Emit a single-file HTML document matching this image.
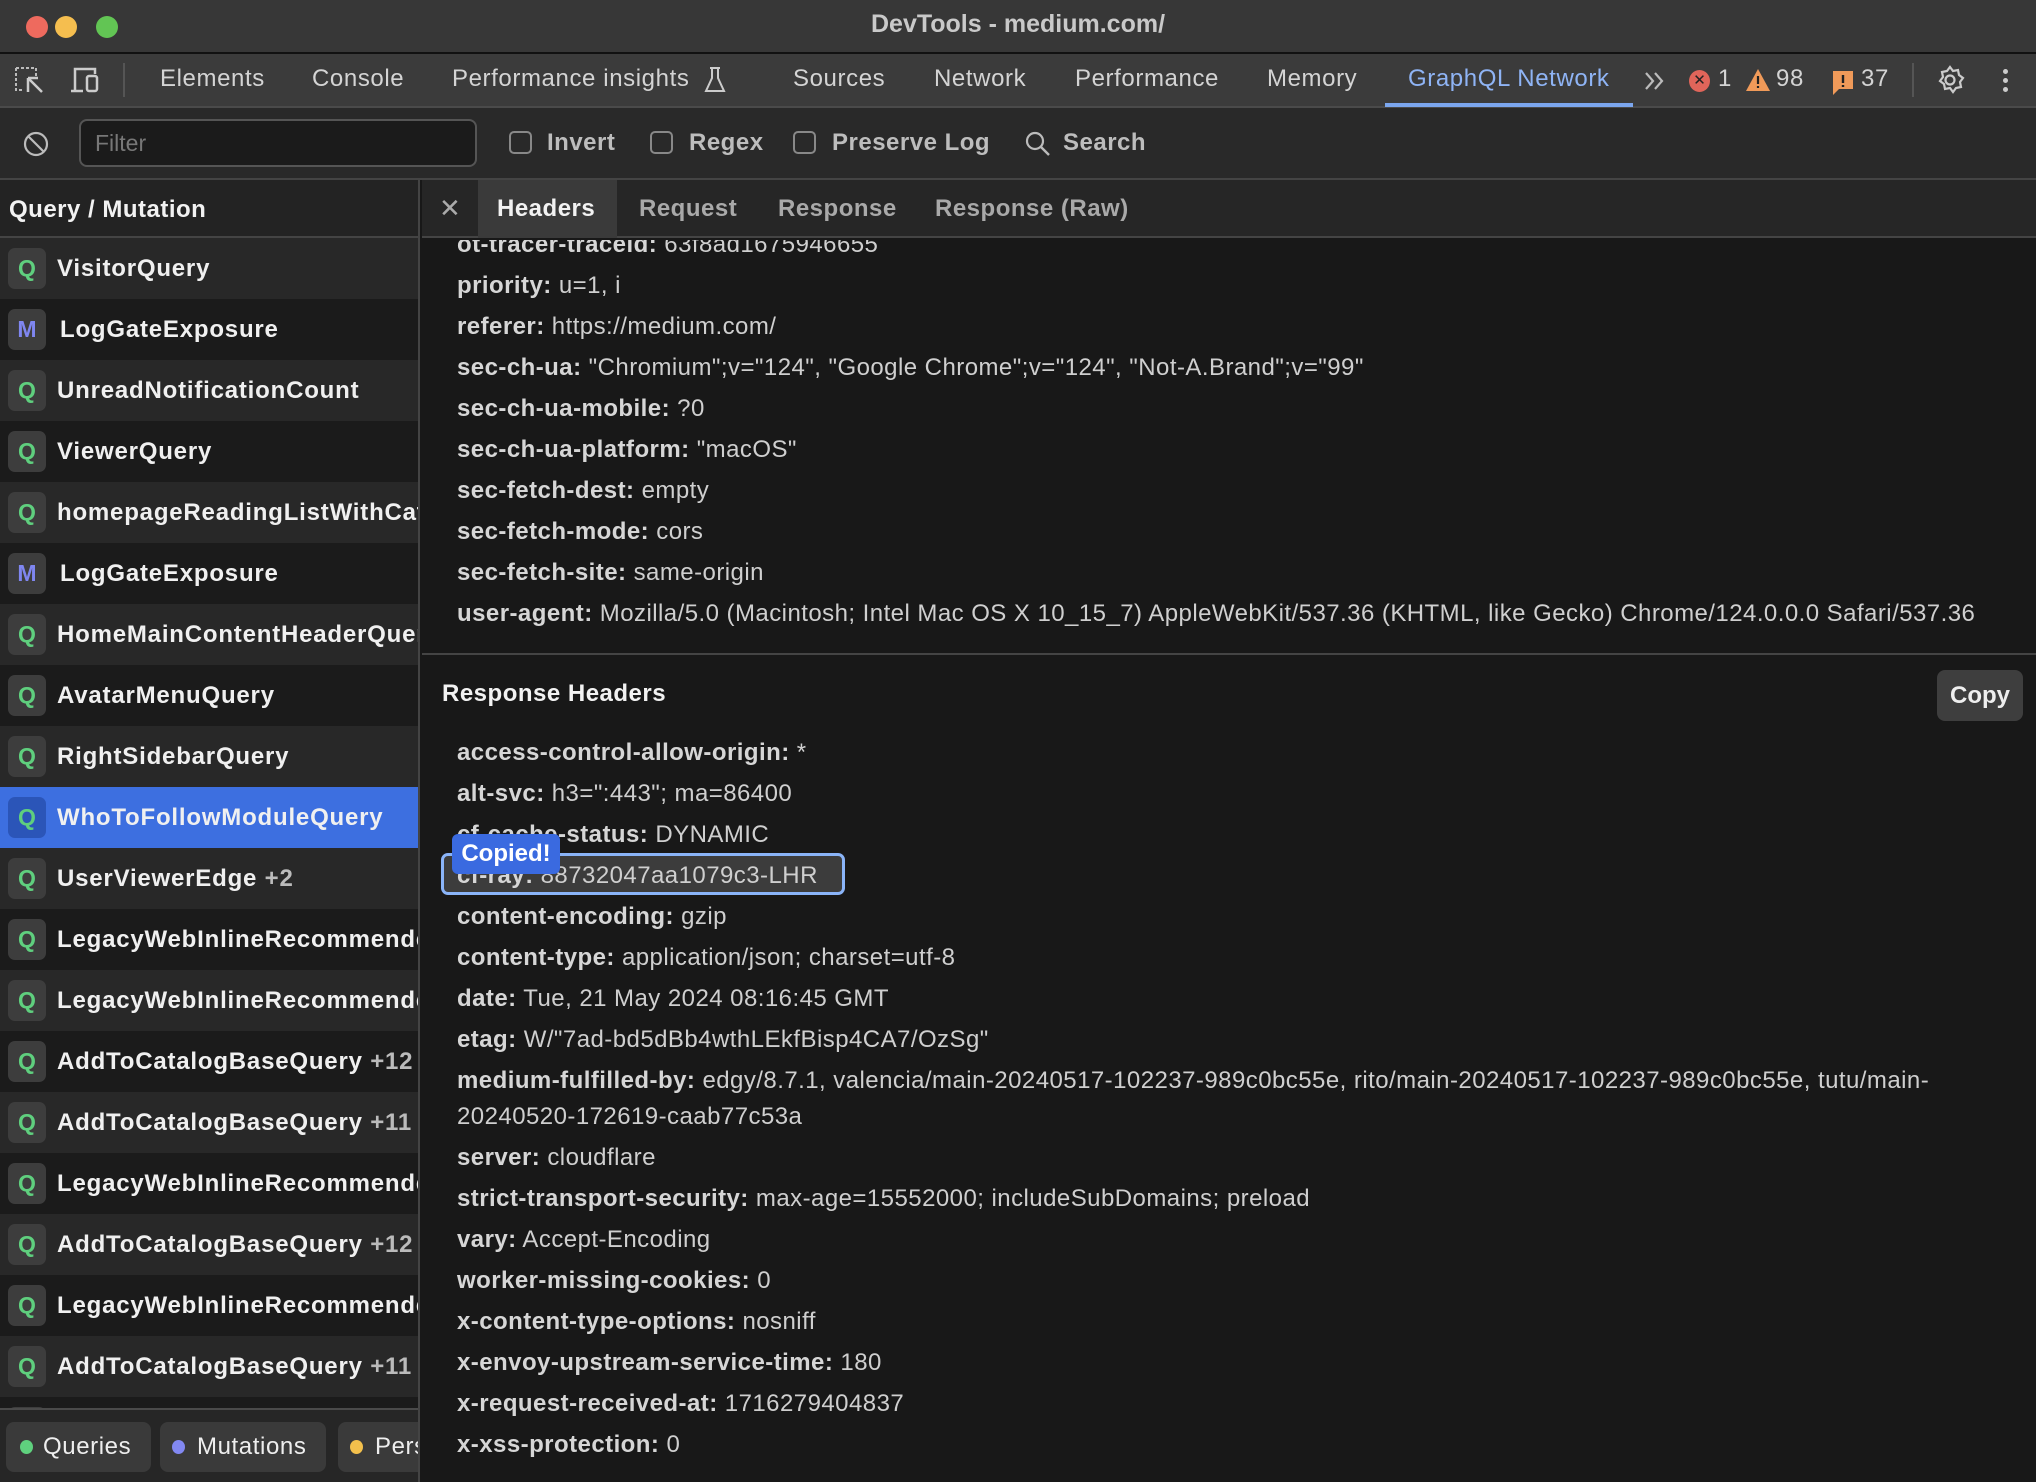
<!DOCTYPE html>
<html><head><meta charset="utf-8"><style>
*{margin:0;padding:0;box-sizing:border-box}
body{width:2036px;height:1482px;background:#181818;font-family:"Liberation Sans",sans-serif;overflow:hidden;position:relative;color:#ddd}
.a{position:absolute;white-space:nowrap}
#title{left:0;top:0;width:2036px;height:54px;background:#373737;border-bottom:2px solid #111}
#tb{left:0;top:54px;width:2036px;height:54px;background:#3b3b3b;border-bottom:2px solid #4a4a4a}
.tab{top:65px;font-size:24px;letter-spacing:.6px;color:#d4d4d4}
#fb{left:0;top:108px;width:2036px;height:72px;background:#292929;border-bottom:2px solid #444}
.fl{top:129px;font-size:24px;letter-spacing:.5px;color:#bdbdbd;font-weight:bold}
.cb{top:131px;width:23px;height:23px;border:2px solid #888;border-radius:5px}
#left{left:0;top:180px;width:420px;height:1302px;background:#232323;border-right:2px solid #444;overflow:hidden}
.row{position:absolute;left:0;width:418px;height:61px;overflow:hidden;white-space:nowrap}
.row .b{position:absolute;left:8px;top:10px;width:38px;height:41px;background:#3d3d3d;border-radius:7px;font-weight:bold;font-size:23px;text-align:center;line-height:41px}
.row .t{position:absolute;left:57px;top:0;line-height:61px;font-size:24px;letter-spacing:.8px;font-weight:bold;color:#f0f0f0}
.row .t span{color:#bbb;font-weight:bold}
.q{color:#5fcf7e}.m{color:#7f86f0}
#tabs{left:422px;top:180px;width:1614px;height:58px;background:#262626;border-bottom:2px solid #444}
.rt{top:195px;font-size:24px;letter-spacing:.5px;color:#a9a9a9;font-weight:bold}
.ln{position:absolute;left:457px;font-size:24px;letter-spacing:.45px;color:#cfcfcf;line-height:41px;white-space:nowrap}
.ln b{color:#d6d6d6}
</style></head><body>
<div class="a" id="title"></div>
<div class="a" style="left:26px;top:16px;width:22px;height:22px;border-radius:50%;background:#ee6a5e"></div>
<div class="a" style="left:55px;top:16px;width:22px;height:22px;border-radius:50%;background:#f5be4f"></div>
<div class="a" style="left:96px;top:16px;width:22px;height:22px;border-radius:50%;background:#62c554"></div>
<div class="a" style="left:0;width:2036px;top:10px;text-align:center;font-size:25px;font-weight:bold;color:#c9c9c9">DevTools - medium.com/</div>

<div class="a" id="tb"></div>
<svg class="a" style="left:14px;top:66px" width="34" height="30" viewBox="0 0 34 30"><path d="M2 2h20v8M2 2v22h8" stroke="#bbb" stroke-width="2" stroke-dasharray="3 2" fill="none"/><path d="M14 12v14M14 12h10M14 12l14 14" stroke="#ccc" stroke-width="2.5" fill="none"/></svg>
<svg class="a" style="left:70px;top:66px" width="34" height="30" viewBox="0 0 34 30"><path d="M5 24V3h20v5M1 25h12" stroke="#ccc" stroke-width="2.5" fill="none"/><rect x="17" y="10" width="10" height="15" rx="2" stroke="#ccc" stroke-width="2.5" fill="none"/></svg>
<div class="a" style="left:123px;top:63px;width:2px;height:34px;background:#555"></div>
<div class="a tab" style="left:160px">Elements</div>
<div class="a tab" style="left:312px">Console</div>
<div class="a tab" style="left:452px">Performance insights</div>
<svg class="a" style="left:703px;top:66px" width="24" height="28" viewBox="0 0 24 28"><path d="M7 2h10M9 2v10L3 25h18L15 12V2" stroke="#ccc" stroke-width="2" fill="none"/></svg>
<div class="a tab" style="left:793px">Sources</div>
<div class="a tab" style="left:934px">Network</div>
<div class="a tab" style="left:1075px">Performance</div>
<div class="a tab" style="left:1267px">Memory</div>
<div class="a tab" style="left:1408px;color:#8fb4f5">GraphQL Network</div>
<div class="a" style="left:1385px;top:103px;width:248px;height:4px;background:#7ba6ee"></div>
<svg class="a" style="left:1643px;top:70px" width="24" height="22" viewBox="0 0 24 22"><path d="M3 3l7 8-7 8M12 3l7 8-7 8" stroke="#bbb" stroke-width="2.2" fill="none"/></svg>
<div class="a" style="left:1689px;top:70px;width:21px;height:22px;border-radius:50%;background:#e0655a;color:#222;font-size:15px;text-align:center;line-height:22px">✕</div>
<div class="a tab" style="left:1718px">1</div>
<svg class="a" style="left:1745px;top:68px" width="26" height="24" viewBox="0 0 26 24"><path d="M13 1L25 23H1Z" fill="#f09a59"/><path d="M13 8v8M13 18v2" stroke="#222" stroke-width="2.2"/></svg>
<div class="a tab" style="left:1776px">98</div>
<svg class="a" style="left:1832px;top:70px" width="22" height="26" viewBox="0 0 22 26"><path d="M1 1h20v18H7l-6 6Z" fill="#f09a59"/><path d="M11 5v8M11 15v2" stroke="#222" stroke-width="2.4"/></svg>
<div class="a tab" style="left:1861px">37</div>
<div class="a" style="left:1912px;top:63px;width:2px;height:34px;background:#555"></div>
<svg class="a" style="left:1935px;top:65px" width="30" height="30" viewBox="0 0 30 30"><circle cx="15" cy="15" r="4.5" stroke="#ccc" stroke-width="2.2" fill="none"/><path d="M15 2l3 4 5-1 1 5 4 3-3 4 1 5-5 1-3 4-3-4-5 1-1-5-4-3 3-4-1-5 5-1z" stroke="#ccc" stroke-width="2.2" fill="none"/></svg>
<div class="a" style="left:2003px;top:69px;width:5px;height:5px;border-radius:50%;background:#ccc;box-shadow:0 9px 0 #ccc,0 18px 0 #ccc"></div>

<div class="a" id="fb"></div>
<svg class="a" style="left:22px;top:130px" width="28" height="28" viewBox="0 0 28 28"><circle cx="14" cy="14" r="11" stroke="#bbb" stroke-width="2.2" fill="none"/><path d="M6 6l16 16" stroke="#bbb" stroke-width="2.2"/></svg>
<div class="a" style="left:79px;top:119px;width:398px;height:48px;background:#1b1b1b;border:2px solid #555;border-radius:8px"></div>
<div class="a" style="left:95px;top:130px;font-size:23px;color:#777">Filter</div>
<div class="a cb" style="left:509px"></div><div class="a fl" style="left:547px">Invert</div>
<div class="a cb" style="left:650px"></div><div class="a fl" style="left:689px">Regex</div>
<div class="a cb" style="left:793px"></div><div class="a fl" style="left:832px">Preserve Log</div>
<svg class="a" style="left:1024px;top:130px" width="28" height="28" viewBox="0 0 28 28"><circle cx="11" cy="11" r="8" stroke="#bbb" stroke-width="2.2" fill="none"/><path d="M17 17l8 8" stroke="#bbb" stroke-width="2.4"/></svg>
<div class="a fl" style="left:1063px">Search</div>

<div class="a" id="left">
<div class="a" style="left:9px;top:16px;font-size:24px;letter-spacing:.5px;font-weight:bold;color:#f2f2f2">Query / Mutation</div>
<div class="a" style="left:0;top:56px;width:420px;height:2px;background:#444"></div>
<div class="row" style="top:58px;background:#282828"><div class="b q">Q</div><div class="t">VisitorQuery</div></div>
<div class="row" style="top:119px;background:#1b1b1b"><div class="b m">M</div><div class="t" style="left:60px">LogGateExposure</div></div>
<div class="row" style="top:180px;background:#282828"><div class="b q">Q</div><div class="t">UnreadNotificationCount</div></div>
<div class="row" style="top:241px;background:#1b1b1b"><div class="b q">Q</div><div class="t">ViewerQuery</div></div>
<div class="row" style="top:302px;background:#282828"><div class="b q">Q</div><div class="t">homepageReadingListWithCategory</div></div>
<div class="row" style="top:363px;background:#1b1b1b"><div class="b m">M</div><div class="t" style="left:60px">LogGateExposure</div></div>
<div class="row" style="top:424px;background:#282828"><div class="b q">Q</div><div class="t">HomeMainContentHeaderQuery</div></div>
<div class="row" style="top:485px;background:#1b1b1b"><div class="b q">Q</div><div class="t">AvatarMenuQuery</div></div>
<div class="row" style="top:546px;background:#282828"><div class="b q">Q</div><div class="t">RightSidebarQuery</div></div>
<div class="row" style="top:607px;background:#3d6fe0"><div class="b q" style="background:#2b55b8">Q</div><div class="t">WhoToFollowModuleQuery</div></div>
<div class="row" style="top:668px;background:#282828"><div class="b q">Q</div><div class="t">UserViewerEdge <span>+2</span></div></div>
<div class="row" style="top:729px;background:#1b1b1b"><div class="b q">Q</div><div class="t">LegacyWebInlineRecommendedQuery</div></div>
<div class="row" style="top:790px;background:#282828"><div class="b q">Q</div><div class="t">LegacyWebInlineRecommendedQuery</div></div>
<div class="row" style="top:851px;background:#1b1b1b"><div class="b q">Q</div><div class="t">AddToCatalogBaseQuery <span>+12</span></div></div>
<div class="row" style="top:912px;background:#282828"><div class="b q">Q</div><div class="t">AddToCatalogBaseQuery <span>+11</span></div></div>
<div class="row" style="top:973px;background:#1b1b1b"><div class="b q">Q</div><div class="t">LegacyWebInlineRecommendedQuery</div></div>
<div class="row" style="top:1034px;background:#282828"><div class="b q">Q</div><div class="t">AddToCatalogBaseQuery <span>+12</span></div></div>
<div class="row" style="top:1095px;background:#1b1b1b"><div class="b q">Q</div><div class="t">LegacyWebInlineRecommendedQuery</div></div>
<div class="row" style="top:1156px;background:#282828"><div class="b q">Q</div><div class="t">AddToCatalogBaseQuery <span>+11</span></div></div>
<div class="row" style="top:1217px;background:#1b1b1b"><div class="b q">Q</div></div>
<div class="a" style="left:0;top:1228px;width:420px;height:74px;background:#262626;border-top:2px solid #4a4a4a"></div>
<div class="a" style="left:6px;top:1242px;width:145px;height:50px;background:#3a3a3a;border-radius:8px;font-size:24px;letter-spacing:.6px;color:#eee;line-height:50px;padding-left:14px"><span style="display:inline-block;width:13px;height:14px;border-radius:50%;background:#5fd17e;margin-right:10px"></span>Queries</div>
<div class="a" style="left:160px;top:1242px;width:166px;height:50px;background:#3a3a3a;border-radius:8px;font-size:24px;letter-spacing:.6px;color:#eee;line-height:50px;padding-left:12px"><span style="display:inline-block;width:13px;height:14px;border-radius:50%;background:#8288f2;margin-right:12px"></span>Mutations</div>
<div class="a" style="left:338px;top:1242px;width:120px;height:50px;background:#3a3a3a;border-radius:8px;font-size:24px;letter-spacing:.6px;color:#eee;line-height:50px;padding-left:12px"><span style="display:inline-block;width:13px;height:14px;border-radius:50%;background:#f3c04c;margin-right:12px"></span>Persisted</div>
</div>

<div class="a" id="tabs"></div>
<div class="a" style="left:478px;top:180px;width:139px;height:58px;background:#3a3a3a"></div>
<div class="a" style="left:439px;top:193px;font-size:26px;color:#aaa">✕</div>
<div class="a rt" style="left:497px;color:#f2f2f2">Headers</div>
<div class="a rt" style="left:639px">Request</div>
<div class="a rt" style="left:778px">Response</div>
<div class="a rt" style="left:935px">Response (Raw)</div>

<div class="a" style="left:422px;top:240px;width:1614px;height:412px;overflow:hidden">
<div style="position:absolute;left:0;top:-16px">
<div class="ln" style="left:35px;top:0"><b>ot-tracer-traceid:</b> 63f8ad1675946655</div>
<div class="ln" style="left:35px;top:41px"><b>priority:</b> u=1, i</div>
<div class="ln" style="left:35px;top:82px"><b>referer:</b> https://medium.com/</div>
<div class="ln" style="left:35px;top:123px"><b>sec-ch-ua:</b> "Chromium";v="124", "Google Chrome";v="124", "Not-A.Brand";v="99"</div>
<div class="ln" style="left:35px;top:164px"><b>sec-ch-ua-mobile:</b> ?0</div>
<div class="ln" style="left:35px;top:205px"><b>sec-ch-ua-platform:</b> "macOS"</div>
<div class="ln" style="left:35px;top:246px"><b>sec-fetch-dest:</b> empty</div>
<div class="ln" style="left:35px;top:287px"><b>sec-fetch-mode:</b> cors</div>
<div class="ln" style="left:35px;top:328px"><b>sec-fetch-site:</b> same-origin</div>
<div class="ln" style="left:35px;top:369px"><b>user-agent:</b> Mozilla/5.0 (Macintosh; Intel Mac OS X 10_15_7) AppleWebKit/537.36 (KHTML, like Gecko) Chrome/124.0.0.0 Safari/537.36</div>
</div></div>
<div class="a" style="left:422px;top:653px;width:1614px;height:2px;background:#444"></div>
<div class="a" style="left:442px;top:680px;font-size:24px;letter-spacing:.5px;font-weight:bold;color:#f2f2f2">Response Headers</div>
<div class="a" style="left:1937px;top:670px;width:86px;height:51px;background:#3e3e3e;border-radius:8px;font-size:24px;font-weight:bold;color:#eee;text-align:center;line-height:51px">Copy</div>

<div class="ln" style="top:732px"><b>access-control-allow-origin:</b> *</div>
<div class="ln" style="top:773px"><b>alt-svc:</b> h3=":443"; ma=86400</div>
<div class="ln" style="top:814px"><b>cf-cache-status:</b> DYNAMIC</div>
<div class="a" style="left:441px;top:853px;width:404px;height:42px;background:#3c3c3c;border:3px solid #8ab4f8;border-radius:7px"></div>
<div class="ln" style="top:855px"><b>cf-ray:</b> 88732047aa1079c3-LHR</div>
<div class="a" style="left:452px;top:834px;width:108px;height:40px;background:#3a6ae0;border-radius:6px;font-size:24px;font-weight:bold;color:#fff;text-align:center;line-height:40px">Copied!</div>
<div class="ln" style="top:896px"><b>content-encoding:</b> gzip</div>
<div class="ln" style="top:937px"><b>content-type:</b> application/json; charset=utf-8</div>
<div class="ln" style="top:978px"><b>date:</b> Tue, 21 May 2024 08:16:45 GMT</div>
<div class="ln" style="top:1019px"><b>etag:</b> W/"7ad-bd5dBb4wthLEkfBisp4CA7/OzSg"</div>
<div class="ln" style="top:1060px"><b>medium-fulfilled-by:</b> edgy/8.7.1, valencia/main-20240517-102237-989c0bc55e, rito/main-20240517-102237-989c0bc55e, tutu/main-</div>
<div class="ln" style="top:1096px">20240520-172619-caab77c53a</div>
<div class="ln" style="top:1137px"><b>server:</b> cloudflare</div>
<div class="ln" style="top:1178px"><b>strict-transport-security:</b> max-age=15552000; includeSubDomains; preload</div>
<div class="ln" style="top:1219px"><b>vary:</b> Accept-Encoding</div>
<div class="ln" style="top:1260px"><b>worker-missing-cookies:</b> 0</div>
<div class="ln" style="top:1301px"><b>x-content-type-options:</b> nosniff</div>
<div class="ln" style="top:1342px"><b>x-envoy-upstream-service-time:</b> 180</div>
<div class="ln" style="top:1383px"><b>x-request-received-at:</b> 1716279404837</div>
<div class="ln" style="top:1424px"><b>x-xss-protection:</b> 0</div>
</body></html>
